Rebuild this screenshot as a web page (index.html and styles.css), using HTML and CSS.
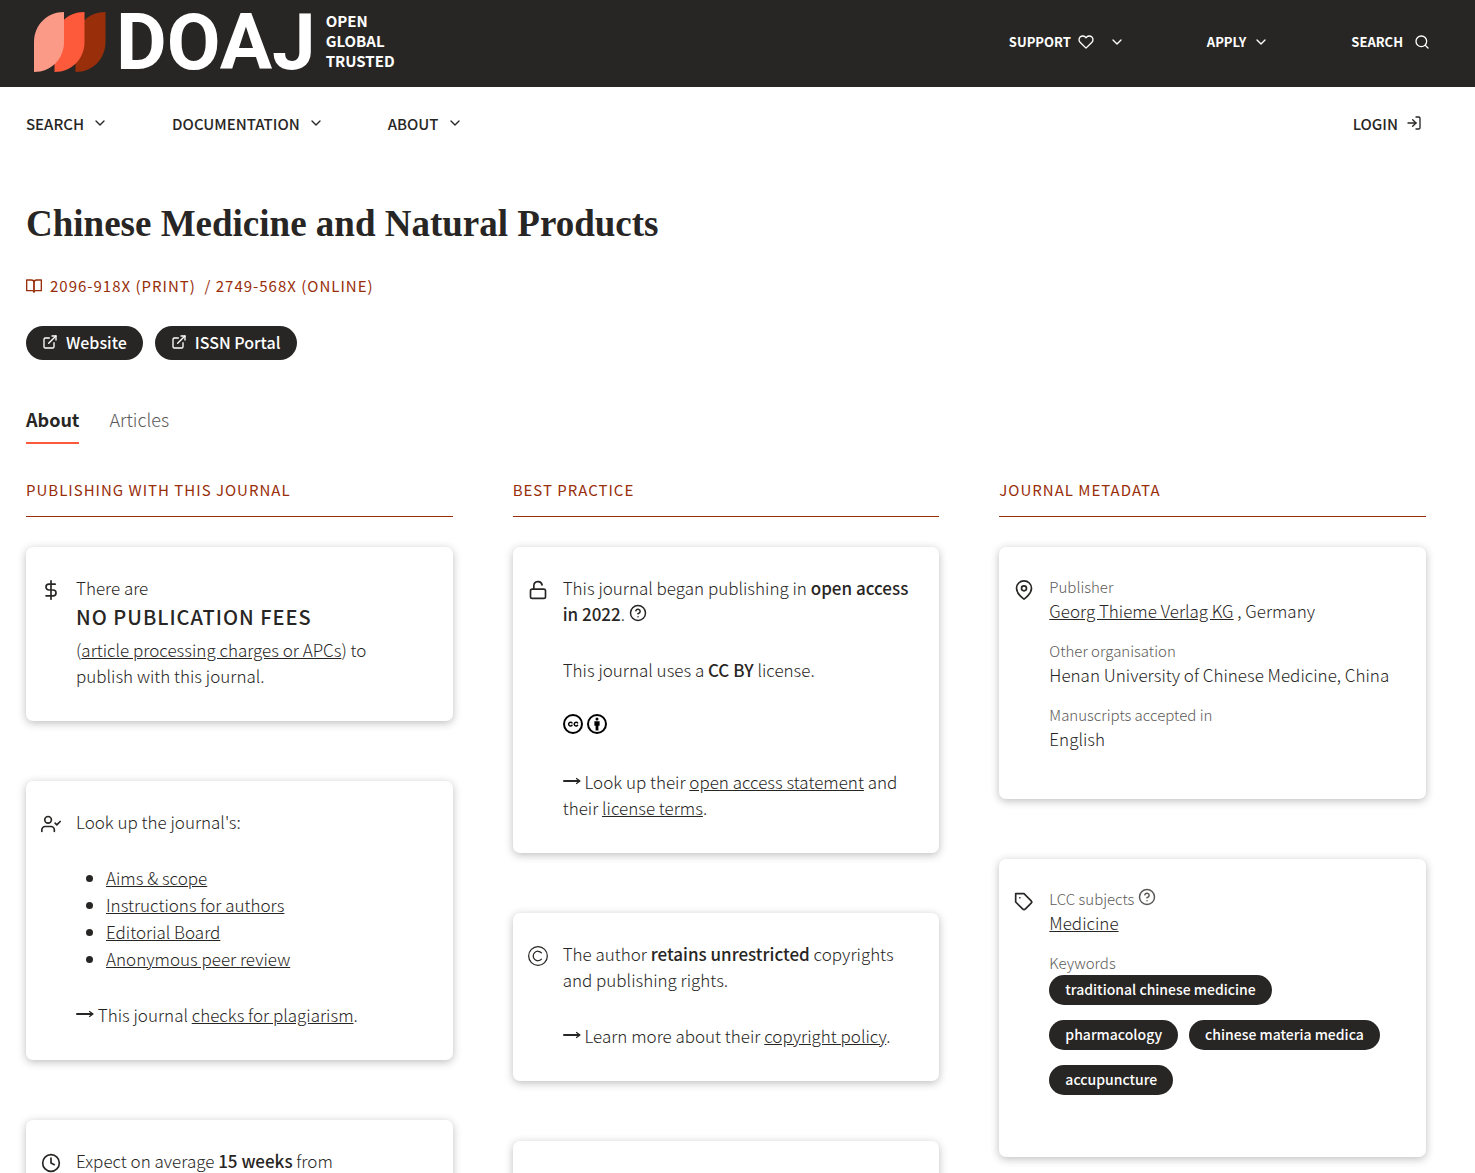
FILE: index.html
```
<!DOCTYPE html>
<html lang="en">
<head>
  <meta charset="utf-8">
  <title>Chinese Medicine and Natural Products – DOAJ</title>
  <link rel="stylesheet" href="styles.css">
</head>
<body>
  <!-- shared icons -->
  <svg class="sprite" aria-hidden="true">
    <symbol id="chevron-down" viewBox="0 0 24 24"><path d="M6 9l6 6 6-6"/></symbol>
    <symbol id="external-link" viewBox="0 0 24 24"><path d="M18 13v6a2 2 0 0 1-2 2H5a2 2 0 0 1-2-2V8a2 2 0 0 1 2-2h6"/><path d="M15 3h6v6"/><path d="M10 14L21 3"/></symbol>
    <symbol id="help-circle" viewBox="0 0 24 24"><circle cx="12" cy="12" r="10"/><path d="M9.09 9a3 3 0 0 1 5.83 1c0 2-3 3-3 3"/><path d="M12 17h.01"/></symbol>
    <symbol id="arrow" viewBox="0 0 18 10"><path d="M1 5h15"/><path stroke-width="1.200" d="M13.500 2.500L17 5l-3.500 2.500"/></symbol>
  </svg>

  <header>
    <div class="masthead">
      <a class="logo" href="#" aria-label="DOAJ">
        <svg class="logo-mark" viewBox="0 0 72 60">
          <path fill="#982e0a" d="M41.500 60V30C41.500 13 54 0 71.500 0v30c0 17-13 30-30 30z"/>
          <path fill="#fd5a3b" d="M20.500 60V30C20.500 13 33 0 50.500 0v30c0 17-13 30-30 30z"/>
          <path fill="#fa9a87" d="M0 60V30C0 13 13 0 30 0v30c0 17-13 30-30 30z"/>
        </svg>
        <span class="logo-name">DOAJ</span>
        <span class="logo-tagline">OPEN<br>GLOBAL<br>TRUSTED</span>
      </a>
      <nav class="masthead-nav">
        <a href="#">Support
          <svg class="icon icon-heart" viewBox="0 0 24 24"><path d="M20.840 4.610a5.500 5.500 0 0 0-7.780 0L12 5.670l-1.060-1.060a5.500 5.500 0 0 0-7.780 7.780l1.060 1.060L12 21.230l7.780-7.780 1.060-1.060a5.500 5.500 0 0 0 0-7.780z"/></svg>
          <svg class="icon"><use href="#chevron-down"/></svg></a>
        <a href="#">Apply <svg class="icon"><use href="#chevron-down"/></svg></a>
        <a class="masthead-search" href="#">Search <svg class="icon" viewBox="0 0 24 24"><circle cx="11" cy="11" r="8"/><path d="M21 21l-4.350-4.350"/></svg></a>
      </nav>
    </div>
    <nav class="main-nav">
      <a href="#">Search <svg class="icon"><use href="#chevron-down"/></svg></a>
      <a href="#">Documentation <svg class="icon"><use href="#chevron-down"/></svg></a>
      <a href="#">About <svg class="icon"><use href="#chevron-down"/></svg></a>
      <a class="login" href="#">Login <svg class="icon" viewBox="0 0 24 24"><path d="M15 3h4a2 2 0 0 1 2 2v14a2 2 0 0 1-2 2h-4"/><path d="M10 17l5-5-5-5"/><path d="M15 12H3"/></svg></a>
    </nav>
  </header>

  <main>
    <h1>Chinese Medicine and Natural Products</h1>
    <p class="issn">
      <svg class="icon" viewBox="0 0 24 24"><path d="M1 3h7a4 4 0 0 1 4 4v14a3 3 0 0 0-3-2H1z"/><path d="M23 3h-7a4 4 0 0 0-4 4v14a3 3 0 0 1 3-2h8z"/></svg>
      <span>2096-918X (Print) &nbsp;/ 2749-568X (Online)</span>
    </p>
    <div class="buttons">
      <a class="button" href="#"><svg class="icon"><use href="#external-link"/></svg>Website</a>
      <a class="button" href="#"><svg class="icon"><use href="#external-link"/></svg>ISSN Portal</a>
    </div>
    <nav class="tabs">
      <a class="tab active" href="#">About</a>
      <a class="tab" href="#">Articles</a>
    </nav>

    <div class="columns">
      <section>
        <h2>Publishing with this journal</h2>
        <div class="card">
          <svg class="card-icon" viewBox="0 0 24 24"><path d="M12 1v22"/><path d="M17 5H9.500a3.500 3.500 0 0 0 0 7h5a3.500 3.500 0 0 1 0 7H6"/></svg>
          <p>There are <strong class="fees">No publication fees</strong> (<a href="#">article processing charges or APCs</a>) to publish with this journal.</p>
        </div>
        <div class="card">
          <svg class="card-icon" viewBox="0 0 24 24"><path d="M16 21v-2a4 4 0 0 0-4-4H5a4 4 0 0 0-4 4v2"/><circle cx="8.500" cy="7" r="4"/><path d="M17 11l2 2 4-4"/></svg>
          <p>Look up the journal's:</p>
          <ul>
            <li><a href="#">Aims &amp; scope</a></li>
            <li><a href="#">Instructions for authors</a></li>
            <li><a href="#">Editorial Board</a></li>
            <li><a href="#">Anonymous peer review</a></li>
          </ul>
          <p><svg class="arrow"><use href="#arrow"/></svg> This journal <a href="#">checks for plagiarism</a>.</p>
        </div>
        <div class="card">
          <svg class="card-icon" viewBox="0 0 24 24"><circle cx="12" cy="12" r="10"/><path d="M12 6v6l4 2"/></svg>
          <p>Expect on average <strong>15 weeks</strong> from submission&nbsp;to publication.</p>
        </div>
      </section>

      <section>
        <h2>Best practice</h2>
        <div class="card">
          <svg class="card-icon" viewBox="0 0 24 24"><rect x="3" y="11" width="18" height="11" rx="2"/><path d="M7 11V7a5 5 0 0 1 9.900-1"/></svg>
          <p>This journal began publishing in <strong>open access in 2022</strong>. <svg class="icon icon-help"><use href="#help-circle"/></svg></p>
          <p>This journal uses a <strong>CC BY</strong> license.</p>
          <p class="licenses">
            <svg class="license" viewBox="0 0 20 20"><circle cx="10" cy="10" r="9"/><path class="cc" d="M9 8.900a1.900 1.900 0 1 0 0 2.400M14.600 8.900a1.900 1.900 0 1 0 0 2.400"/></svg>
            <svg class="license" viewBox="0 0 20 20"><circle cx="10" cy="10" r="9"/><circle class="solid" cx="10" cy="5" r="1.500"/><path class="solid" d="M7.400 7.200h5.200v4.600h-1.200v4.600H8.600v-4.600H7.400z"/></svg>
          </p>
          <p><svg class="arrow"><use href="#arrow"/></svg> Look up their <a href="#">open access statement</a> and their <a href="#">license terms</a>.</p>
        </div>
        <div class="card">
          <svg class="card-icon card-icon-thin" viewBox="0 0 24 24"><circle cx="12" cy="12" r="11.200"/><path d="M16.200 8.200a5.700 5.700 0 1 0 0 7.600"/></svg>
          <p>The author <strong>retains unrestricted</strong> copyrights and publishing rights.</p>
          <p><svg class="arrow"><use href="#arrow"/></svg> Learn more about their <a href="#">copyright policy</a>.</p>
        </div>
        <div class="card"><p>&nbsp;</p></div>
      </section>

      <section>
        <h2>Journal metadata</h2>
        <div class="card">
          <svg class="card-icon" viewBox="0 0 24 24"><path d="M21 10c0 7-9 13-9 13s-9-6-9-13a9 9 0 0 1 18 0z"/><circle cx="12" cy="10" r="3"/></svg>
          <dl>
            <dt>Publisher</dt>
            <dd><a href="#">Georg Thieme Verlag KG</a> , Germany</dd>
            <dt>Other organisation</dt>
            <dd>Henan University of Chinese Medicine, China</dd>
            <dt>Manuscripts accepted in</dt>
            <dd>English</dd>
          </dl>
        </div>
        <div class="card">
          <svg class="card-icon" viewBox="0 0 24 24"><path d="M20.590 13.410l-7.170 7.170a2 2 0 0 1-2.830 0L2 12V2h10l8.590 8.590a2 2 0 0 1 0 2.820z"/><path d="M7 7h.01"/></svg>
          <dl>
            <dt>LCC subjects <svg class="icon icon-help"><use href="#help-circle"/></svg></dt>
            <dd><a href="#">Medicine</a></dd>
            <dt>Keywords</dt>
            <dd class="tags">
              <a class="tag" href="#">traditional chinese medicine</a>
              <a class="tag" href="#">pharmacology</a>
              <a class="tag" href="#">chinese materia medica</a>
              <a class="tag" href="#">accupuncture</a>
            </dd>
          </dl>
        </div>
      </section>
    </div>
  </main>
</body>
</html>
```

FILE: styles.css
```
* { box-sizing: border-box; }

body {
  margin: 0;
  background: #fff;
  color: #282624;
  font: 300 17px/26px "Noto Sans CJK SC", "Open Sans", sans-serif;
}

a { color: inherit; }
p, ul, dl, dd, h1, h2 { margin: 0; }
strong { font-weight: 500; }

.sprite {
  position: absolute;
  width: 0;
  height: 0;
}

.icon {
  width: 16px;
  height: 16px;
  flex: none;
}
.icon, .card-icon, .arrow, .license {
  fill: none;
  stroke: currentColor;
  stroke-width: 2;
  stroke-linecap: round;
  stroke-linejoin: round;
}

/* header */
.masthead {
  display: flex;
  justify-content: space-between;
  align-items: center;
  height: 87px;
  padding: 0 45px 4px 34px;
  background: #282624;
  color: #fff;
}
.masthead a, .main-nav a { text-decoration: none; }
.logo {
  display: flex;
  align-items: center;
  gap: 10px;
}
.logo-mark {
  width: 72px;
  height: 60px;
}
.logo-name {
  padding-top: 2px;
  font: 700 78px/80px Roboto, sans-serif;
}
.logo-tagline {
  padding-bottom: 2px;
  font-size: 15px;
  font-weight: 700;
  line-height: 20px;
}
.masthead-nav {
  display: flex;
  gap: 82px;
  font-size: 13px;
  font-weight: 700;
  text-transform: uppercase;
}
.masthead-nav a {
  display: flex;
  align-items: center;
  gap: 7px;
}
.icon-heart { margin-right: 8px; }
.masthead-nav .masthead-search { gap: 11px; }

.main-nav {
  display: flex;
  gap: 64px;
  padding: 24px 53px 24px 26px;
  font-size: 15px;
  font-weight: 500;
  text-transform: uppercase;
}
.main-nav a {
  display: flex;
  align-items: center;
  gap: 8px;
}
.main-nav .icon { margin-bottom: 2px; }
.login { margin-left: auto; }

/* journal heading */
main { padding: 39px 49px 60px 26px; }
h1 {
  font: 700 37px/48px "Liberation Serif", serif;
}
.issn {
  display: flex;
  align-items: center;
  gap: 8px;
  margin-top: 25px;
  color: #982e0a;
  font-size: 15px;
  font-weight: 400;
  text-transform: uppercase;
  letter-spacing: 1px;
}
.buttons {
  display: flex;
  gap: 12px;
  margin-top: 27px;
}
.button {
  display: flex;
  align-items: center;
  gap: 8px;
  padding: 3px 16px 5px;
  border-radius: 17px;
  background: #282624;
  color: #fff;
  font-size: 16px;
  font-weight: 500;
  text-decoration: none;
}
.tabs {
  display: flex;
  gap: 30px;
  margin-top: 46px;
  font-size: 18px;
}
.tab {
  padding-bottom: 10px;
  border-bottom: 2px solid transparent;
  color: #5c5a58;
  text-decoration: none;
}
.tab.active {
  border-color: #fd5a3b;
  color: #282624;
  font-weight: 700;
}

/* columns and cards */
.columns {
  display: grid;
  grid-template-columns: repeat(3, 1fr);
  gap: 60px;
  margin-top: 33px;
}
h2 {
  margin-bottom: 30px;
  padding-bottom: 13px;
  border-bottom: 1px solid #982e0a;
  color: #982e0a;
  font-size: 15px;
  font-weight: 400;
  line-height: 26px;
  text-transform: uppercase;
  letter-spacing: 1px;
}
.card {
  position: relative;
  margin-bottom: 60px;
  padding: 28px 30px 32px 50px;
  border-radius: 7px;
  box-shadow: 0 2px 8px rgba(40, 38, 36, 0.3);
}
.card p + p, .card ul + p, .card ul { margin-top: 30px; }
.card-icon {
  position: absolute;
  top: 33px;
  left: 15px;
  width: 20px;
  height: 20px;
}
.card-icon-thin { stroke-width: 1.5; }
.fees {
  display: block;
  margin-bottom: 4px;
  font-size: 20px;
  line-height: 32px;
  text-transform: uppercase;
  letter-spacing: 1px;
}
.card ul {
  display: grid;
  gap: 1px;
  padding-left: 30px;
}
.arrow {
  width: 18px;
  height: 10px;
  vertical-align: 3px;
}
.icon-help {
  width: 18px;
  height: 18px;
  vertical-align: -1px;
}
.licenses {
  display: flex;
  align-items: center;
  gap: 4px;
  height: 26px;
  padding-bottom: 4px;
}
.license {
  width: 20px;
  height: 20px;
  color: #000;
}
.license .cc { stroke-width: 1.5; }
.license .solid {
  fill: #000;
  stroke: none;
}

dt {
  color: #5c5a58;
  font-size: 15px;
  line-height: 24px;
}
dd {
  margin-bottom: 16px;
  line-height: 24px;
}
.tags {
  display: flex;
  flex-wrap: wrap;
  gap: 15px 11px;
  margin-bottom: 30px;
}
.tag {
  padding: 2px 16px 4px;
  border-radius: 15px;
  background: #282624;
  color: #fff;
  font-size: 14px;
  font-weight: 500;
  text-decoration: none;
}
```
